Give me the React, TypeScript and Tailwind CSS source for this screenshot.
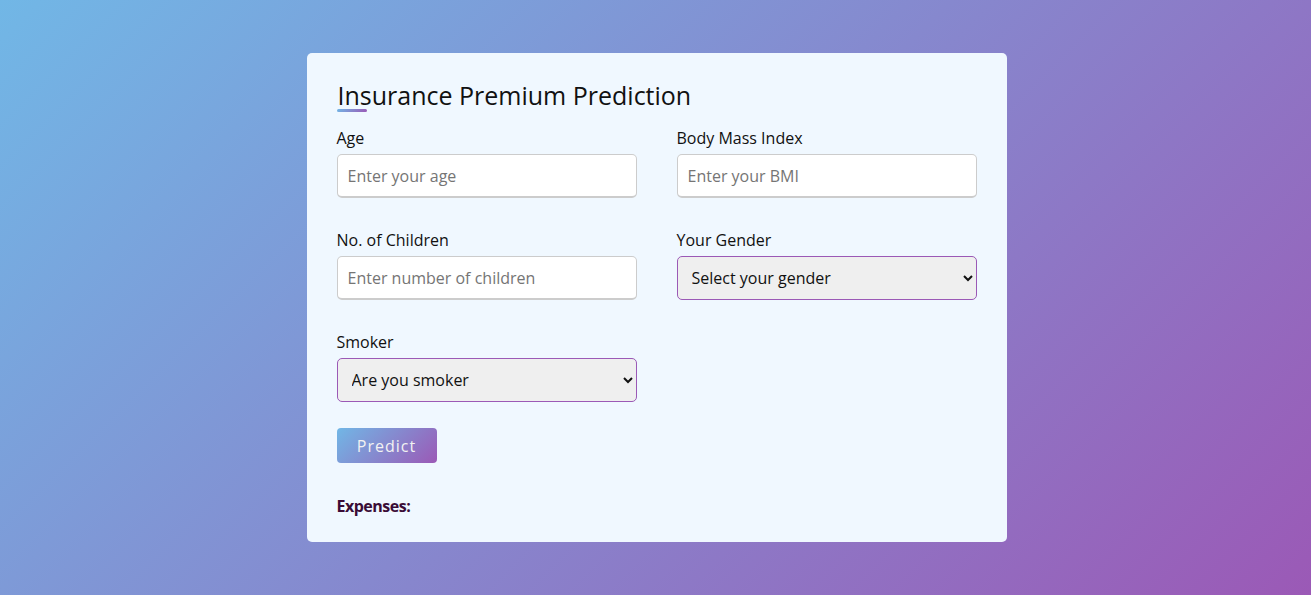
import React from "react";

export default function App() {
  return (
    <div
      className="w-full h-screen flex items-center justify-center bg-[linear-gradient(135deg,#71b7e6,#9b59b6)]"
      style={{ fontFamily: '"Open Sans", "Noto Sans", sans-serif' }}
    >
      <div className="w-[700px] bg-[#f0f8ff] rounded-[5px] px-[30px] pt-[25px] pb-[24px] translate-x-[1px]">
        <div className="relative text-[25px] leading-[34px] text-[#111] pl-[1px]">
          Insurance Premium Prediction
          <span className="absolute left-0 bottom-0 w-[30px] h-[3px] rounded-sm bg-[linear-gradient(135deg,#71b7e6,#9b59b6)]" />
        </div>
        <div className="mt-[15px] grid grid-cols-2 gap-x-[40px] gap-y-[31px]">
          <Field label="Age">
            <input
              className="w-full h-[44px] px-[10px] text-[16px] border border-[#ccc] border-b-2 rounded-[5px] bg-white outline-none placeholder:text-[#757575]"
              placeholder="Enter your age"
            />
          </Field>
          <Field label="Body Mass Index">
            <input
              className="w-full h-[44px] px-[10px] text-[16px] border border-[#ccc] border-b-2 rounded-[5px] bg-white outline-none placeholder:text-[#757575]"
              placeholder="Enter your BMI"
            />
          </Field>
          <Field label="No. of Children">
            <input
              className="w-full h-[44px] px-[10px] text-[16px] border border-[#ccc] border-b-2 rounded-[5px] bg-white outline-none placeholder:text-[#757575]"
              placeholder="Enter number of children"
            />
          </Field>
          <Field label="Your Gender">
            <select className="w-full h-[44px] px-[10px] text-[16px] text-[#111] border border-[#9b59b6] rounded-[5px] bg-[#efefef] outline-none">
              <option>Select your gender</option>
              <option>Male</option>
              <option>Female</option>
            </select>
          </Field>
          <Field label="Smoker">
            <select className="w-full h-[44px] px-[10px] text-[16px] text-[#111] border border-[#9b59b6] rounded-[5px] bg-[#efefef] outline-none">
              <option>Are you smoker</option>
              <option>Yes</option>
              <option>No</option>
            </select>
          </Field>
        </div>
        <button className="mt-[26px] w-[100px] h-[35px] rounded-[4px] text-[16px] tracking-[1px] text-[#f2f2f2] bg-[linear-gradient(135deg,#71b7e6,#9b59b6)]">
          Predict
        </button>
        <div className="mt-[31px] text-[16px] leading-[24px] font-bold text-[#3a0c36] tracking-[-0.5px]">
          Expenses:
        </div>
      </div>
    </div>
  );
}

function Field({ label, children }: { label: string; children: React.ReactNode }) {
  return (
    <div className="flex flex-col">
      <label className="text-[16px] leading-[22px] text-[#111]">{label}</label>
      <div className="mt-[5px]">{children}</div>
    </div>
  );
}
